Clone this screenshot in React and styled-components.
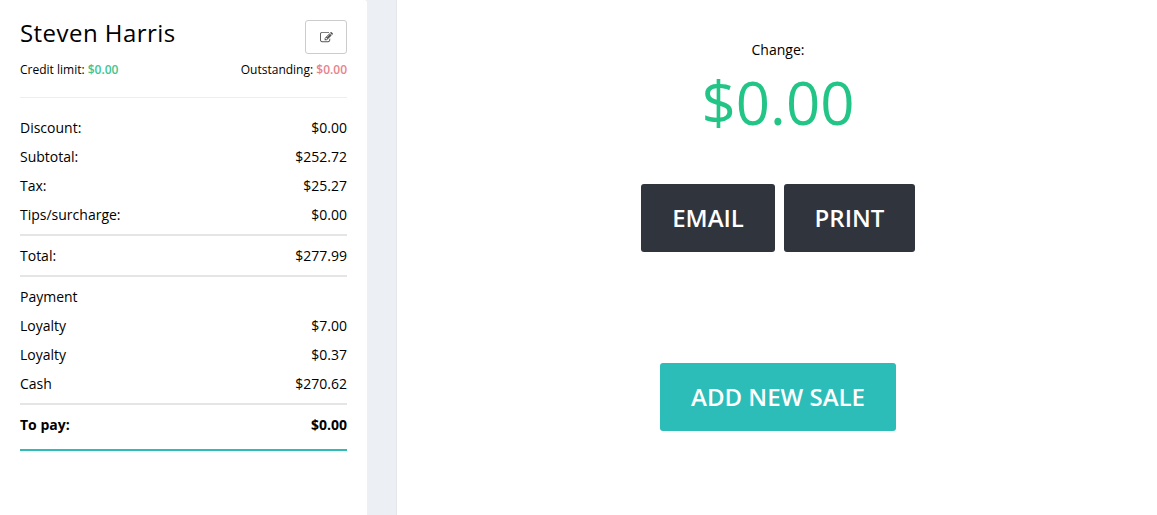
import React from "react";
import styled, { createGlobalStyle } from "styled-components";

const GlobalStyle = createGlobalStyle`
  html, body {
    margin: 0;
    padding: 0;
    background: #ffffff;
  }
  body {
    font-family: "Open Sans", "Liberation Sans", sans-serif;
    color: #000;
  }
`;

const Page = styled.div`
  display: flex;
  width: 1157px;
  height: 515px;
  overflow: hidden;
  background: #ecf0f5;
`;

const Sidebar = styled.aside`
  width: 367px;
  box-sizing: border-box;
  padding: 20px 20px 0;
  background: #fff;
  border-top-right-radius: 3px;
`;

const Main = styled.main`
  flex: 1;
  display: flex;
  flex-direction: column;
  align-items: center;
  margin-left: 29px;
  padding-top: 40px;
  padding-left: 2px;
  background: #fff;
  border-left: 1px solid #e4e8ee;
`;

const Header = styled.div`
  display: flex;
  justify-content: space-between;
  align-items: flex-start;
  height: 34px;
`;

const Name = styled.h2`
  margin: 0;
  font-size: 24px;
  line-height: 26px;
  font-weight: 500;
  letter-spacing: 0.45px;
`;

const EditButton = styled.button`
  width: 42px;
  height: 34px;
  padding: 0;
  display: flex;
  align-items: center;
  justify-content: center;
  background: #fff;
  border: 1px solid #ccc;
  border-radius: 3px;
  color: #555;
`;

const EditIcon = () => (
  <svg width="13" height="13" viewBox="0 0 1792 1792" fill="currentColor">
    <path d="M888 1184l116-116-152-152-116 116v56h96v96h56zm440-720q-16-16-33 1l-350 350q-17 17-1 33t33-1l350-350q17-17 1-33zm80 594v190q0 119-84.5 203.5t-203.5 84.5h-832q-119 0-203.5-84.5t-84.5-203.5v-832q0-119 84.5-203.5t203.5-84.5h832q63 0 117 25 15 7 18 23 3 17-9 29l-49 49q-14 14-32 8-23-6-45-6h-832q-66 0-113 47t-47 113v832q0 66 47 113t113 47h832q66 0 113-47t47-113v-126q0-13 9-22l64-64q15-15 35-7t20 29zm-96-738l288 288-672 672h-288v-288zm444 132l-92 92-288-288 92-92q28-28 68-28t68 28l152 152q28 28 28 68t-28 68z" />
  </svg>
);

const Limits = styled.div`
  display: flex;
  justify-content: space-between;
  margin-top: 7px;
  padding-bottom: 19px;
  border-bottom: 1px solid #eceef0;
  font-size: 12px;
  line-height: 17px;
`;

const Amount = styled.span`
  font-weight: 600;
  color: ${(p) => p.$color};
`;

const Rows = styled.div`
  padding-top: 15px;
`;

const Row = styled.div`
  display: flex;
  justify-content: space-between;
  height: 29px;
  line-height: 29px;
  font-size: 14px;
  font-weight: ${(p) => (p.$bold ? 700 : 400)};
`;

const Divided = styled.div`
  border-top: 2px solid #e4e5e7;
  padding-top: 5px;
  margin-top: 5px;
`;

const Closing = styled(Divided)`
  padding-bottom: 10px;
  border-bottom: 2px solid #2dbdb6;
`;

const ChangeLabel = styled.div`
  font-size: 14px;
  line-height: 19px;
`;

const ChangeValue = styled.div`
  margin-top: 2px;
  margin-bottom: 41px;
  font-size: 60px;
  line-height: 82px;
  color: #23c586;
`;

const ActionRow = styled.div`
  display: flex;
  gap: 9px;
  margin-bottom: 111px;
`;

const ActionButton = styled.button`
  width: ${(p) => p.$width}px;
  height: 68px;
  padding: 0 0 2px;
  border: 0;
  border-radius: 3px;
  background: ${(p) => p.$bg};
  color: #fff;
  font-family: inherit;
  font-size: 24px;
  font-weight: 600;
`;

const rows = [
  ["Discount:", "$0.00"],
  ["Subtotal:", "$252.72"],
  ["Tax:", "$25.27"],
  ["Tips/surcharge:", "$0.00"],
];

const payments = [
  ["Payment", ""],
  ["Loyalty", "$7.00"],
  ["Loyalty", "$0.37"],
  ["Cash", "$270.62"],
];

const renderRow = ([label, value], i) => (
  <Row key={i}>
    <span>{label}</span>
    <span>{value}</span>
  </Row>
);

export default function App() {
  return (
    <Page>
      <GlobalStyle />
      <Sidebar>
        <Header>
          <Name>Steven Harris</Name>
          <EditButton>
            <EditIcon />
          </EditButton>
        </Header>
        <Limits>
          <span>
            Credit limit: <Amount $color="#3fc58f">$0.00</Amount>
          </span>
          <span>
            Outstanding: <Amount $color="#e8838b">$0.00</Amount>
          </span>
        </Limits>
        <Rows>
          {rows.map(renderRow)}
          <Divided>{renderRow(["Total:", "$277.99"], 0)}</Divided>
          <Divided>{payments.map(renderRow)}</Divided>
          <Closing>
            <Row $bold>
              <span>To pay:</span>
              <span>$0.00</span>
            </Row>
          </Closing>
        </Rows>
      </Sidebar>
      <Main>
        <ChangeLabel>Change:</ChangeLabel>
        <ChangeValue>$0.00</ChangeValue>
        <ActionRow>
          <ActionButton $bg="#30353d" $width={134}>EMAIL</ActionButton>
          <ActionButton $bg="#30353d" $width={131}>PRINT</ActionButton>
        </ActionRow>
        <ActionButton $bg="#2dbdb9" $width={236}>ADD NEW SALE</ActionButton>
      </Main>
    </Page>
  );
}
